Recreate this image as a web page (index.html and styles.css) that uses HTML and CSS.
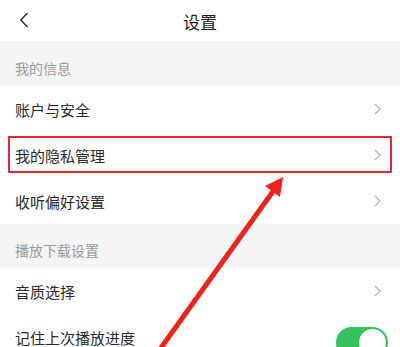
FILE: index.html
```html
<!DOCTYPE html>
<html lang="zh-CN">
<head>
    <meta charset="UTF-8">
    <meta name="viewport" content="width=device-width, initial-scale=1.0">
    <title>设置</title>
    <link rel="stylesheet" href="styles.css">
</head>
<body>
    <div class="page">
        <div class="nav">
            <svg class="back" width="10" height="16" viewBox="0 0 10 16">
                <path d="M8 1.5 L1.8 8 L8 14.5" fill="none" stroke="#333" stroke-width="1.6" stroke-linecap="round" stroke-linejoin="round"/>
            </svg>
            <div class="nav-title">设置</div>
        </div>

        <div class="section-title">我的信息</div>
        <div class="row">
            <span>账户与安全</span>
            <svg class="more" width="7" height="12" viewBox="0 0 7 12"><path d="M1 1 L6 6 L1 11" fill="none" stroke="#b4b4b4" stroke-width="1.2"/></svg>
        </div>
        <div class="row marked">
            <span>我的隐私管理</span>
            <svg class="more" width="7" height="12" viewBox="0 0 7 12"><path d="M1 1 L6 6 L1 11" fill="none" stroke="#b4b4b4" stroke-width="1.2"/></svg>
        </div>
        <div class="row">
            <span>收听偏好设置</span>
            <svg class="more" width="7" height="12" viewBox="0 0 7 12"><path d="M1 1 L6 6 L1 11" fill="none" stroke="#b4b4b4" stroke-width="1.2"/></svg>
        </div>

        <div class="section-title small">播放下载设置</div>
        <div class="row">
            <span>音质选择</span>
            <svg class="more" width="7" height="12" viewBox="0 0 7 12"><path d="M1 1 L6 6 L1 11" fill="none" stroke="#b4b4b4" stroke-width="1.2"/></svg>
        </div>
        <div class="row">
            <span>记住上次播放进度</span>
            <div class="switch on"><div class="knob"></div></div>
        </div>

        <!-- annotation arrow -->
        <svg class="arrow" width="400" height="347" viewBox="0 0 400 347">
            <line x1="158" y1="352" x2="274" y2="190" stroke="#f2201c" stroke-width="5"/>
            <polygon points="283,177 280,197 265,186" fill="#f2201c"/>
        </svg>
    </div>
</body>
</html>
```

FILE: styles.css
```css
body {
    margin: 0;
    font-family: "Noto Sans CJK SC", "Noto Sans", sans-serif;
    background-color: #fff;
}
.page {
    position: relative;
    width: 400px;
    height: 347px;
    overflow: hidden;
}
.nav {
    height: 41px;
    display: flex;
    align-items: center;
    justify-content: center;
    position: relative;
    background-color: #fff;
}
.nav .back {
    position: absolute;
    left: 19px;
    top: 12px;
}
.nav-title {
    font-size: 17px;
    color: #222;
    padding-top: 1px;
}
.section-title {
    height: 45px;
    box-sizing: border-box;
    padding: 8px 15px 0;
    display: flex;
    align-items: center;
    background-color: #f5f5f5;
    font-size: 14px;
    color: #9a9a9a;
}
.section-title.small {
    height: 44px;
}
.row {
    height: 46px;
    box-sizing: border-box;
    padding: 0 19px 0 15px;
    display: flex;
    align-items: center;
    justify-content: space-between;
    background-color: #fff;
    font-size: 15px;
    color: #2a2a2a;
    position: relative;
}
.row.marked::after {
    content: "";
    position: absolute;
    left: 8px;
    right: 8px;
    top: 4px;
    bottom: 5px;
    border: 2px solid #e9262a;
}
.switch {
    width: 52px;
    height: 31px;
    border-radius: 16px;
    background-color: #34c25a;
    position: relative;
    margin-right: -7px;
    margin-top: 10px;
}
.switch .knob {
    position: absolute;
    right: 2px;
    top: 2px;
    width: 27px;
    height: 27px;
    border-radius: 50%;
    background-color: #fff;
    box-shadow: 0 1px 2px rgba(0, 0, 0, 0.15);
}
.arrow {
    position: absolute;
    left: 0;
    top: 0;
    pointer-events: none;
}
```
